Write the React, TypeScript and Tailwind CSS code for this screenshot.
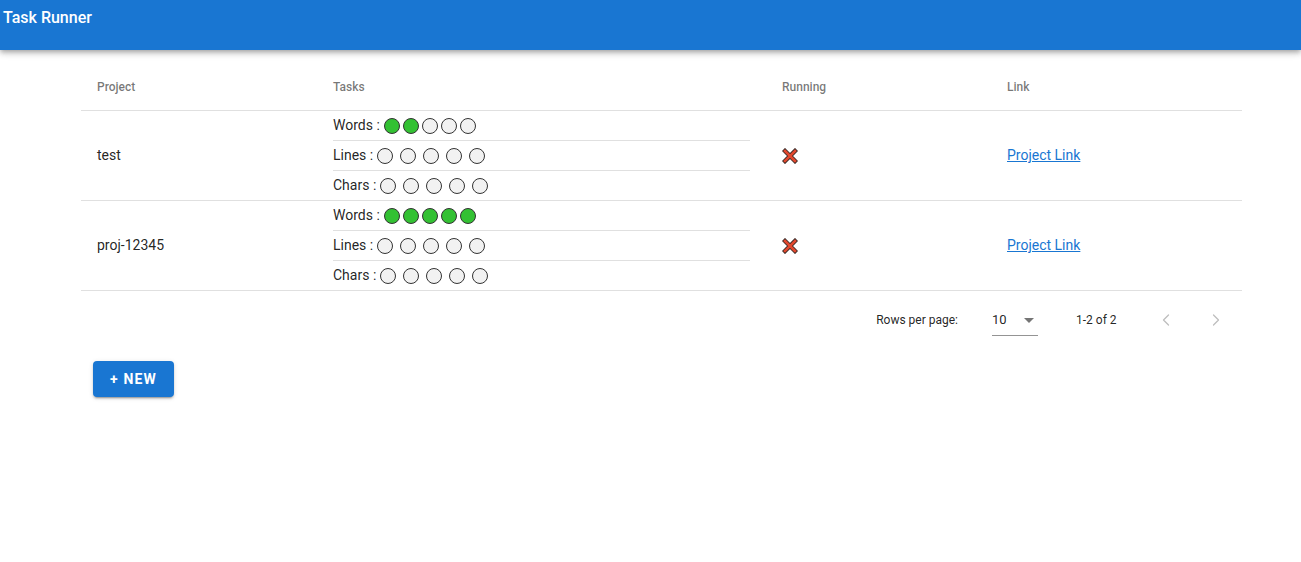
import { ChevronLeft, ChevronRight } from "lucide-react"

type Task = { name: string; done: number; gap: string }

const projects: { name: string; tasks: Task[] }[] = [
  {
    name: "test",
    tasks: [
      { name: "Words", done: 2, gap: "gap-[3px]" },
      { name: "Lines", done: 0, gap: "gap-[7px]" },
      { name: "Chars", done: 0, gap: "gap-[7px]" },
    ],
  },
  {
    name: "proj-12345",
    tasks: [
      { name: "Words", done: 5, gap: "gap-[3px]" },
      { name: "Lines", done: 0, gap: "gap-[7px]" },
      { name: "Chars", done: 0, gap: "gap-[7px]" },
    ],
  },
]

const Dot = ({ on }: { on: boolean }) => (
  <span
    className={`inline-block w-4 h-4 rounded-full border border-[#333] ${on ? "bg-[#33c133]" : "bg-[#f2f2f2]"}`}
  />
)

const CrossMark = () => (
  <svg width="16" height="16" viewBox="0 0 16 16">
    <path d="M3 3 L13 13 M13 3 L3 13" stroke="#3a2a26" strokeWidth="4.4" strokeLinecap="square" />
    <path d="M3 3 L13 13 M13 3 L3 13" stroke="#e2492f" strokeWidth="2.6" strokeLinecap="square" />
  </svg>
)

export default function App() {
  return (
    <div className="min-h-screen bg-white font-['Roboto',sans-serif] text-[rgba(0,0,0,0.87)]">
      <header className="h-[50px] bg-[#1976d2] shadow-[0_2px_4px_-1px_rgba(0,0,0,0.2),0_4px_5px_0_rgba(0,0,0,0.14),0_1px_10px_0_rgba(0,0,0,0.12)]">
        <div className="pl-[3px] pt-[8px] text-[16px] font-medium text-white leading-[20px]">Task Runner</div>
      </header>

      <div className="mx-[81px] mt-[13px] w-[1161px]">
        <div className="flex h-[48px] items-center border-b border-[#e0e0e0] text-[12px] font-medium text-[rgba(0,0,0,0.54)]">
          <div className="w-[236px] pl-4">Project</div>
          <div className="w-[449px] pl-4">Tasks</div>
          <div className="w-[225px] pl-4">Running</div>
          <div className="flex-1 pl-4">Link</div>
        </div>

        {projects.map((p) => (
          <div key={p.name} className="flex items-center border-b border-[#e0e0e0] text-[14px]">
            <div className="w-[236px] pl-4">{p.name}</div>
            <div className="w-[449px] px-4">
              {p.tasks.map((t, i) => (
                <div
                  key={t.name}
                  className={`flex items-center ${i < p.tasks.length - 1 ? "h-[30px] border-b border-[#e0e0e0]" : "h-[29px]"}`}
                >
                  <span className="mr-[4px]">{t.name} :</span>
                  <span className={`flex ${t.gap}`}>
                    {[0, 1, 2, 3, 4].map((k) => (
                      <Dot key={k} on={k < t.done} />
                    ))}
                  </span>
                </div>
              ))}
            </div>
            <div className="w-[225px] pl-4 flex items-center">
              <CrossMark />
            </div>
            <div className="flex-1 pl-4">
              <a href="#" className="text-[#1976d2] underline">
                Project Link
              </a>
            </div>
          </div>
        ))}

        <div className="flex h-[56px] items-center justify-end pt-[2px] text-[12px] text-[rgba(0,0,0,0.87)]">
          <span className="mr-[34px]">Rows per page:</span>
          <div className="flex h-[32px] w-[46px] items-center border-b border-[rgba(0,0,0,0.42)] text-[13px]">
            <span className="flex-1">10</span>
            <svg width="24" height="24" viewBox="0 0 24 24" className="mr-[-3px] text-[rgba(0,0,0,0.54)]">
              <path d="M7 10l5 5 5-5z" fill="currentColor" />
            </svg>
          </div>
          <span className="ml-[38px] w-[66px] text-[12px]">1-2 of 2</span>
          <div className="flex">
            <div className="flex h-[48px] w-[48px] items-center justify-center text-[rgba(0,0,0,0.26)]">
              <ChevronLeft size={20} strokeWidth={1.5} />
            </div>
            <div className="ml-[2px] flex h-[48px] w-[48px] items-center justify-center text-[rgba(0,0,0,0.26)]">
              <ChevronRight size={20} strokeWidth={1.5} />
            </div>
          </div>
          <div className="w-[2px]" />
        </div>
      </div>

      <button className="ml-[93px] mt-[14px] flex h-[36px] w-[81px] items-center justify-center rounded-[4px] bg-[#1976d2] text-[14px] font-bold tracking-[1.2px] text-white shadow-[0_3px_1px_-2px_rgba(0,0,0,0.2),0_2px_2px_0_rgba(0,0,0,0.14),0_1px_5px_0_rgba(0,0,0,0.12)]">
        + NEW
      </button>
    </div>
  )
}
